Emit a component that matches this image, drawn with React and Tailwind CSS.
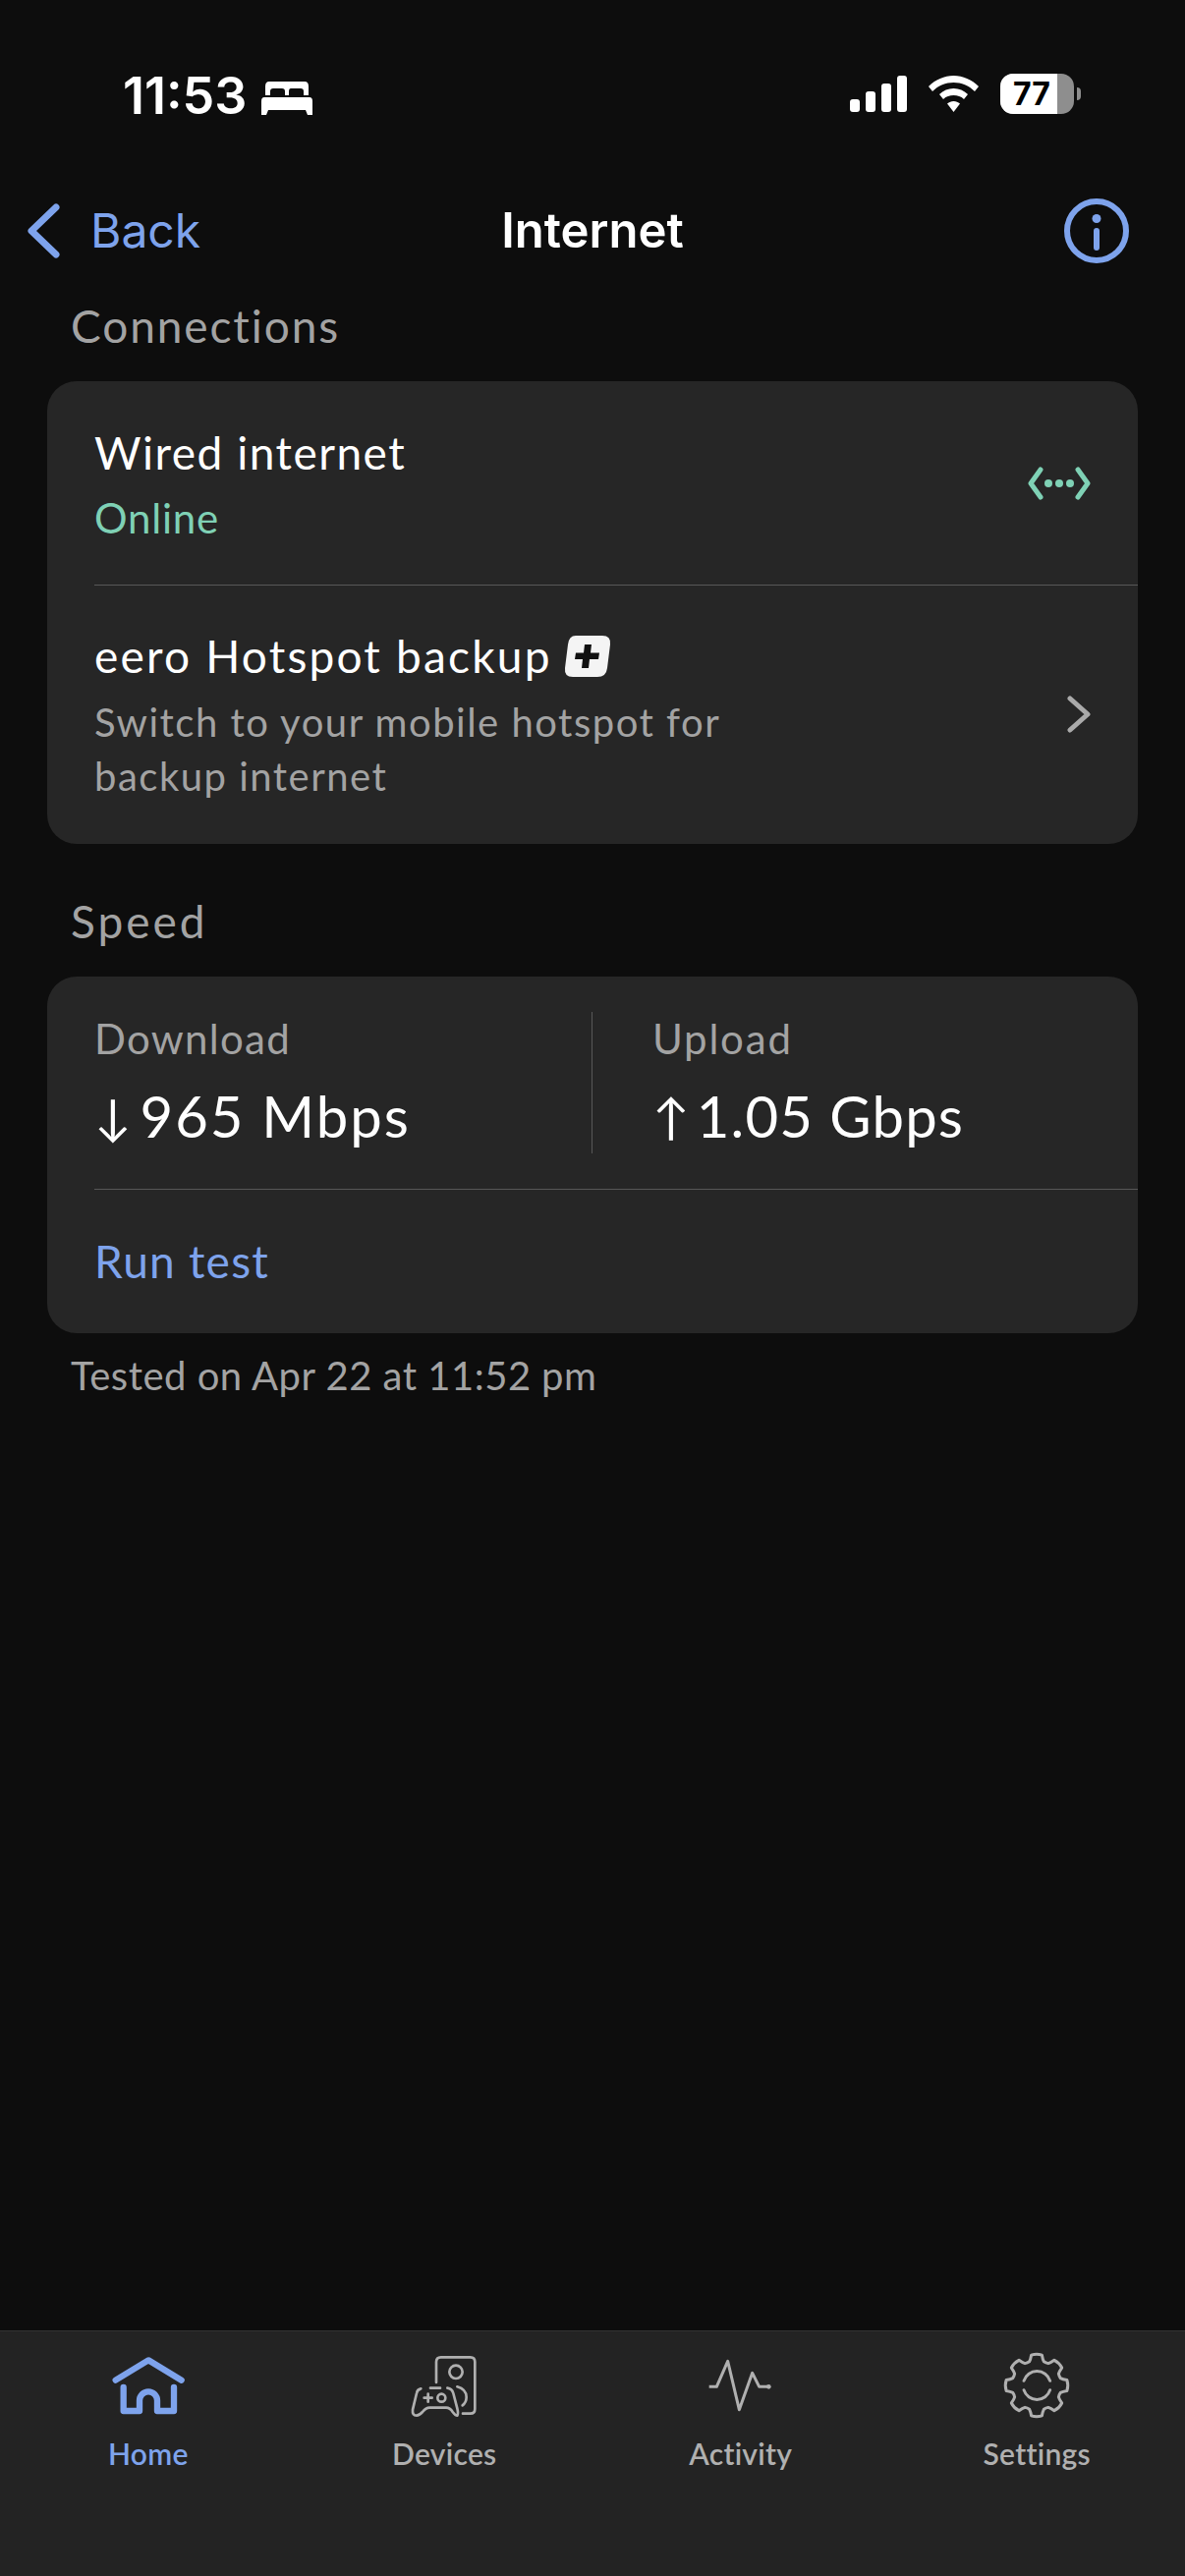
import React from 'react';

// gear outline for the settings tab, 8 teeth around the icon centre
const gearPath = () => {
  const cx = 1187;
  const cy = 204;
  let d = '';
  for (let i = 0; i < 8; i++) {
    const a = (i * 45 - 90) * (Math.PI / 180);
    const pt = (r, off) => {
      const t = a + off * (Math.PI / 180);
      return `${(cx + r * Math.cos(t)).toFixed(1)} ${(cy + r * Math.sin(t)).toFixed(1)}`;
    };
    d += `${i === 0 ? 'M' : 'L'}${pt(76, -17)} Q${pt(82, -13)} ${pt(94, -10)} Q${pt(98, 0)} ${pt(94, 10)} Q${pt(82, 13)} ${pt(76, 17)} Q${pt(74, 22.5)} ${pt(76, 28)} `;
  }
  return d + 'Z';
};

const BLUE = '#7ea3ec';
const GREY = '#b0b0b0';

const HomeIcon = () => (
  <svg width="80" height="66" viewBox="152 108 240 198" fill="none" stroke={BLUE} strokeWidth="19" strokeLinecap="round" strokeLinejoin="round">
    <path d="M172 188 L272 127 L373 188" />
    <path d="M196 210 V282 H245 V250 A27 27 0 0 1 299 250 V282 H350 V210" />
  </svg>
);

const DevicesIcon = () => (
  <svg width="80" height="66" viewBox="1056 108 240 198" fill="none" stroke={GREY} strokeWidth="8" strokeLinecap="round" strokeLinejoin="round">
    <path d="M1152 195 V132 Q1152 118 1166 118 H1256 Q1270 118 1270 132 V276 Q1270 290 1256 290 H1233" />
    <circle cx="1212" cy="163" r="20" />
    <path d="M1105 214 Q1094 216 1092 228 L1080 278 Q1078 296 1092 296 Q1100 296 1110 285 Q1120 272 1132 272 H1182 Q1194 272 1202 285 Q1210 296 1216 296 Q1220 290 1216 274 L1204 228 Q1200 214 1186 212" />
    <path d="M1134 212 H1164" />
    <path d="M1115 242 H1139 M1127 230 V254" />
    <circle cx="1168" cy="242" r="12" />
    <path d="M1216 208 Q1244 216 1244 240 Q1244 256 1232 265" />
  </svg>
);

const ActivityIcon = () => (
  <svg width="80" height="66" viewBox="162 108 240 198" fill="none" stroke={GREY} strokeWidth="9" strokeLinejoin="round">
    <path d="M185 208 H208 L242 130 L277 278 L317 166 L338 208 H365" />
    <circle cx="367" cy="208" r="7" fill={GREY} stroke="none" />
  </svg>
);

const SettingsIcon = () => (
  <svg width="80" height="66" viewBox="1067 108 240 198" fill="none" stroke={GREY} strokeWidth="9" strokeLinecap="round" strokeLinejoin="round" className="overflow-visible">
    <path d={gearPath()} />
    <path d="M1148 190 A42 42 0 0 1 1228 190" />
    <path d="M1148 218 A42 42 0 0 0 1228 218" />
  </svg>
);

const NavItem = ({ icon, label, active }) => (
  <div className="flex flex-col items-center">
    {icon}
    <span className={`mt-[17px] text-[30px] leading-[36px] font-semibold tracking-[0.3px] ${active ? 'text-[#7ea3ec]' : 'text-[#b0b0b0]'}`}>
      {label}
    </span>
  </div>
);

const StatusBar = () => (
  <div className="flex h-[185px] items-start justify-between pt-[72px] pl-[125px] pr-[106px]">
    <div className="flex items-center gap-[15px] text-white">
      <span className="font-['Inter',sans-serif] text-[52px] leading-[52px] font-semibold">11:53</span>
      <svg width="52" height="34" viewBox="0 0 52 34" fill="white" className="mt-[4px]">
        <path d="M8 0 H44 Q48 0 48 5 V14 H43 V10 Q43 7 40 7 H30 Q28 7 28 10 V14 H24 V10 Q24 7 21 7 H12 Q9 7 9 10 V14 H4 V5 Q4 0 8 0 Z" />
        <path d="M3 16 H49 Q52 16 52 20 V34 H47 L45 29 H7 L5 34 H0 V20 Q0 16 3 16 Z" />
      </svg>
    </div>
    <div className="flex items-center pt-[3px]">
      <svg width="58" height="37" viewBox="0 0 58 37" fill="white">
        <rect x="0" y="24" width="10" height="13" rx="3" />
        <rect x="16" y="16" width="10" height="21" rx="3" />
        <rect x="32" y="8" width="10" height="29" rx="3" />
        <rect x="48" y="0" width="10" height="37" rx="3" />
      </svg>
      <svg width="51" height="37" viewBox="0 0 51 37" fill="white" className="ml-[22px]">
        <path d="M25.5 0 C35 0 44 4 51 11 L47 16 C41 10 33.500 7 25.500 7 C17.500 7 10 10 4 16 L0 11 C7 4 16 0 25.500 0 Z" />
        <path d="M25.500 13 C31 13 36 15 40 19 L36 24 C33 21 29.500 20 25.500 20 C21.500 20 18 21 15 24 L11 19 C15 15 20 13 25.500 13 Z" />
        <path d="M25.500 26 C28 26 30 27 32 28.500 L25.500 37 L19 28.500 C21 27 23 26 25.500 26 Z" />
      </svg>
      <div className="ml-[22px] flex items-center">
        <div className="flex h-[41px] w-[75px] overflow-hidden rounded-[13px] bg-[#8e8e8e]">
          <div className="flex w-[58px] items-center justify-center bg-white pl-[6px] font-['Inter',sans-serif] text-[32px] leading-none font-bold text-black">
            77
          </div>
        </div>
        <div className="ml-[3px] h-[13px] w-[4px] rounded-r-full bg-[#8e8e8e]" />
      </div>
    </div>
  </div>
);

const Header = () => (
  <div className="grid h-[100px] grid-cols-[1fr_auto_1fr] items-center px-[28px]">
    <div className="flex items-center">
      <svg width="33" height="56" viewBox="0 0 33 56" fill="none" stroke={BLUE} strokeWidth="7" strokeLinecap="round" strokeLinejoin="round">
        <path d="M29 4 L4 28 L29 52" />
      </svg>
      <span className="ml-[31px] font-['Inter',sans-serif] text-[48px] leading-[60px] text-[#7ea3ec]">Back</span>
    </div>
    <span className="font-['Inter',sans-serif] text-[49px] leading-[60px] font-semibold text-white">Internet</span>
    <div className="flex justify-end pr-[29px]">
      <svg width="66" height="66" viewBox="0 0 66 66" fill="none" stroke={BLUE}>
        <circle cx="33" cy="33" r="30" strokeWidth="6" />
        <circle cx="33" cy="20.500" r="4.500" fill={BLUE} stroke="none" />
        <path d="M33 33 V50" strokeWidth="6" strokeLinecap="round" />
      </svg>
    </div>
  </div>
);

const Divider = () => <div className="ml-[48px] h-px bg-[#575757]" />;

export default function App() {
  return (
    <div className="flex h-[2622px] w-[1206px] flex-col overflow-hidden bg-[#0d0d0d] font-['Lato',sans-serif]">
      <StatusBar />
      <Header />

      <main className="flex-1 px-[48px]">
        <p className="mt-[22px] pl-[24px] text-[46px] leading-[50px] tracking-[1.9px] text-[#a3a3a3]">Connections</p>

        <section className="mt-[31px] rounded-[30px] bg-[#262626]">
          <div className="flex items-center justify-between pt-[45px] pb-[40px] pl-[48px] pr-[48px]">
            <div>
              <p className="text-[46px] leading-[56px] tracking-[1.5px] text-white">Wired internet</p>
              <p className="mt-[10px] text-[42px] leading-[56px] tracking-[0.8px] text-[#7fd1b5]">Online</p>
            </div>
            <svg width="64" height="34" viewBox="0 0 64 34" fill="none" stroke="#7fd1b5" strokeWidth="5" strokeLinecap="round" strokeLinejoin="round" className="mb-[4px]">
              <path d="M13 3 L3 17 L13 31" />
              <path d="M51 3 L61 17 L51 31" />
              <circle cx="21" cy="17" r="4" fill="#7fd1b5" stroke="none" />
              <circle cx="32" cy="17" r="4" fill="#7fd1b5" stroke="none" />
              <circle cx="43" cy="17" r="4" fill="#7fd1b5" stroke="none" />
            </svg>
          </div>
          <Divider />
          <div className="flex items-center justify-between pt-[44px] pb-[41px] pl-[48px] pr-[48px]">
            <div>
              <div className="flex items-center">
                <p className="text-[46px] leading-[56px] tracking-[2.2px] text-white">eero Hotspot backup</p>
                <svg width="48" height="42" viewBox="0 0 48 42" className="ml-[12px]">
                  <path d="M12 0 H39 Q48 0 47 9 L44 33 Q43 42 34 42 H9 Q0 42 1 33 L4 9 Q5 0 12 0 Z" fill="#f4f4f4" />
                  <path d="M21 9 H28 L27 17.500 H36 L35 24 H26 L25 33 H18 L19 24 H11 L12 17.500 H20 Z" fill="#111" />
                </svg>
              </div>
              <p className="mt-[12px] w-[700px] text-[40px] leading-[55px] tracking-[1.5px] text-[#a3a3a3]">
                Switch to your mobile hotspot for backup internet
              </p>
            </div>
            <svg width="24" height="38" viewBox="0 0 24 38" fill="none" stroke="#aaaaaa" strokeWidth="5" strokeLinecap="round" strokeLinejoin="round" className="mb-[4px]">
              <path d="M3 3 L21 19 L3 35" />
            </svg>
          </div>
        </section>

        <p className="mt-[54px] pl-[24px] text-[46px] leading-[50px] tracking-[3px] text-[#a3a3a3]">Speed</p>

        <section className="mt-[31px] rounded-[30px] bg-[#262626]">
          <div className="flex pt-[36px] pb-[36px] pl-[48px]">
            <div className="w-[507px] border-r border-[#575757] pt-[2px] pb-[5px]">
              <p className="text-[42px] leading-[50px] tracking-[1.3px] text-[#a3a3a3]">Download</p>
              <p className="mt-[21px] text-[58px] leading-[66px] tracking-[2px] text-white">
                <span className="mr-[7px] align-[3px] text-[50px]">↓</span>965 Mbps
              </p>
            </div>
            <div className="pt-[2px] pl-[61px]">
              <p className="text-[42px] leading-[50px] tracking-[1.8px] text-[#a3a3a3]">Upload</p>
              <p className="mt-[21px] text-[58px] leading-[66px] tracking-[1.2px] text-white">
                <span className="mr-[6px] align-[3px] text-[50px]">↑</span>1.05 Gbps
              </p>
            </div>
          </div>
          <Divider />
          <div className="pt-[45px] pb-[45px] pl-[48px]">
            <p className="text-[46px] leading-[56px] tracking-[1.25px] text-[#7ea3ec]">Run test</p>
          </div>
        </section>

        <p className="mt-[18px] pl-[24px] text-[40px] leading-[50px] tracking-[0.5px] text-[#a3a3a3]">Tested on Apr 22 at 11:52{'\u202f'}pm</p>
      </main>

      <nav className="grid h-[250px] grid-cols-4 border-t border-[#333333] bg-[#232323] pt-[23px]">
        <NavItem icon={<HomeIcon />} label="Home" active />
        <NavItem icon={<DevicesIcon />} label="Devices" />
        <NavItem icon={<ActivityIcon />} label="Activity" />
        <NavItem icon={<SettingsIcon />} label="Settings" />
      </nav>
    </div>
  );
}
